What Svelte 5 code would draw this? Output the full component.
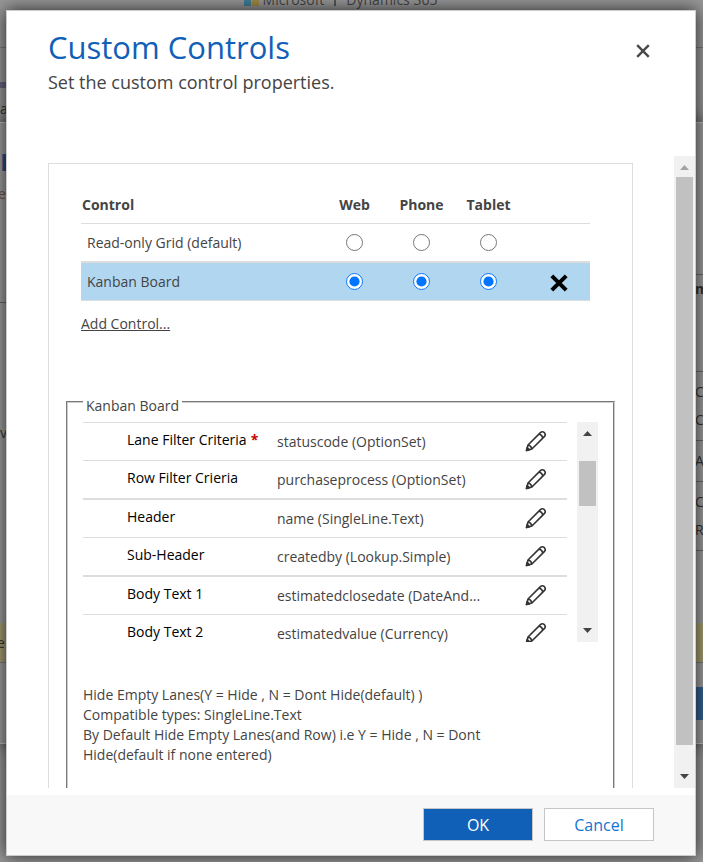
<script>
  const devices = ['Web', 'Phone', 'Tablet'];
  const controls = ['Read-only Grid (default)', 'Kanban Board'];
  let selected = $state({ Web: 1, Phone: 1, Tablet: 1 });

  const properties = [
    { name: 'Lane Filter Criteria', value: 'statuscode (OptionSet)', required: true },
    { name: 'Row Filter Crieria', value: 'purchaseprocess (OptionSet)' },
    { name: 'Header', value: 'name (SingleLine.Text)' },
    { name: 'Sub-Header', value: 'createdby (Lookup.Simple)' },
    { name: 'Body Text 1', value: 'estimatedclosedate (DateAnd...' },
    { name: 'Body Text 2', value: 'estimatedvalue (Currency)' }
  ];
</script>

{#snippet arrow(direction, muted)}
  <svg class="arrow" class:muted width="9" height="5" viewBox="0 0 9 5" aria-hidden="true">
    <path d={direction === 'up' ? 'M0 5L4.5 0L9 5Z' : 'M0 0L4.5 5L9 0Z'} fill="currentColor" />
  </svg>
{/snippet}

<div class="screen">
  <div class="page" aria-hidden="true">
    <div class="brand">
      <svg width="15" height="16" viewBox="0 0 15 16">
        <path d="M0 0H7V16H0Z" fill="#3f7f98" />
        <path d="M8 0H15V16H8Z" fill="#a08a45" />
      </svg>
      <span>Microsoft</span><span class="bar"></span><span>Dynamics 365</span>
    </div>
    <div class="ribbon"><i></i>a</div>
    <div class="under">
      <div class="under-body">
        <div class="left">
          <div class="top"><strong>r</strong><em>e</em></div>
          <div class="mid">v</div>
        </div>
        <div class="right">
          <div class="top"></div>
          <div class="heading">m</div>
          <div>C<br />C</div>
          <div>A</div>
          <div>C<br />R</div>
        </div>
      </div>
      <div class="under-note">e</div>
      <div class="under-foot"><div></div></div>
    </div>
  </div>

  <div class="dialog" role="dialog" aria-labelledby="title" aria-describedby="subtitle">
    <header>
      <div>
        <h1 id="title">Custom Controls</h1>
        <p id="subtitle">Set the custom control properties.</p>
      </div>
      <button class="close" aria-label="Close">
        <svg width="14" height="14" viewBox="0 0 14 14" aria-hidden="true">
          <path d="M1.2 1.2L12.8 12.8M12.8 1.2L1.2 12.8" stroke="#4a4a4a" stroke-width="2.4" />
        </svg>
      </button>
    </header>

    <div class="body">
      <div class="viewport">
        <section class="panel">
          <table>
            <thead>
              <tr>
                <th class="name">Control</th>
                {#each devices as device}<th class="device">{device}</th>{/each}
                <th class="remove"></th>
              </tr>
            </thead>
            <tbody>
              {#each controls as control, i}
                <tr class:selected={i === 1}>
                  <td class="name">{control}</td>
                  {#each devices as device}
                    <td class="device">
                      <input
                        type="radio"
                        name={device}
                        value={i}
                        bind:group={selected[device]}
                        aria-label={`${control}, ${device}`}
                      />
                    </td>
                  {/each}
                  <td class="remove">
                    {#if i === 1}
                      <button aria-label="Remove Kanban Board">
                        <svg width="18" height="18" viewBox="0 0 18 18" aria-hidden="true">
                          <path d="M1.8 1.8L16.2 16.2M16.2 1.8L1.8 16.2" stroke="#000" stroke-width="4" />
                        </svg>
                      </button>
                    {/if}
                  </td>
                </tr>
              {/each}
            </tbody>
          </table>
          <a class="add" href="#add">Add Control...</a>

          <fieldset>
            <legend>Kanban Board</legend>
            <div class="properties">
              <ul>
                {#each properties as property}
                  <li>
                    <span class="label">{property.name}{#if property.required}<b>*</b>{/if}</span>
                    <span class="value">{property.value}</span>
                    <button aria-label={`Edit ${property.name}`}>
                      <svg width="22" height="22" viewBox="0 0 22 22" fill="none" stroke="#333" stroke-width="1.6" stroke-linejoin="round" aria-hidden="true">
                        <path d="M1.6 20.4L3 15L15.4 2.6Q17.3.8 19.4 2.7Q21.2 4.7 19.3 6.6L6.9 19Z" />
                        <path d="M3 15Q6.2 15.6 6.9 19M14 4Q17 4.8 17.9 8" />
                        <path d="M1.4 20.6L2.2 17.5L4.5 19.8Z" fill="#333" />
                      </svg>
                    </button>
                  </li>
                {/each}
              </ul>
              <div class="scrollbar inner">
                {@render arrow('up', false)}
                <div class="track"><div class="thumb"></div></div>
                {@render arrow('down', false)}
              </div>
            </div>
            <p class="help">
              Hide Empty Lanes(Y = Hide , N = Dont Hide(default) )<br />
              Compatible types: SingleLine.Text<br />
              By Default Hide Empty Lanes(and Row) i.e Y = Hide , N = Dont Hide(default if none entered)
            </p>
          </fieldset>
        </section>
      </div>
      <div class="scrollbar">
        {@render arrow('up', true)}
        <div class="track"><div class="thumb"></div></div>
        {@render arrow('down', false)}
      </div>
    </div>

    <footer>
      <button class="primary">OK</button>
      <button>Cancel</button>
    </footer>
  </div>
</div>

<style>
  :global(body) {
    margin: 0;
  }

  .screen {
    position: relative;
    box-sizing: border-box;
    display: flex;
    height: 100vh;
    padding: 10px 7px 6px 6px;
    overflow: hidden;
    background: #979797;
    color: #444;
    font: 14px/20px "Segoe UI", "Open Sans", "Noto Sans", sans-serif;
  }

  /* dimmed page behind the dialog */
  .page {
    position: absolute;
    inset: 0;
    display: flex;
    flex-direction: column;
    overflow: hidden;
  }
  .brand {
    display: flex;
    flex: none;
    align-items: flex-start;
    justify-content: center;
    gap: 4px;
    height: 58px;
    margin-top: -10px;
    padding-right: 22px;
    border-bottom: 1px solid #777;
    box-sizing: border-box;
    color: #444;
  }
  .bar {
    width: 2px;
    height: 16px;
    margin: 0 6px;
    background: #555;
  }
  .ribbon {
    flex: none;
    height: 74px;
    color: #333;
    line-height: 66px;
    padding-top: 0;
  }
  .ribbon i {
    display: block;
    width: 6px;
    height: 6px;
    margin: 34px 0 -12px;
    background: #666280;
  }
  .under {
    display: flex;
    flex-direction: column;
    flex: none;
    height: 620px;
    border-bottom: 1px solid #bbb;
    border-top: 1px solid #bbb;
    background: #9b9b9b;
    box-shadow: 0 0 16px #333;
  }
  .under-body {
    display: flex;
    flex: none;
    justify-content: space-between;
    height: 500px;
    color: #333;
    line-height: 28px;
  }
  .left .top {
    height: 180px;
    padding-top: 23px;
    box-sizing: border-box;
    border-bottom: 1px solid #666;
  }
  .left strong {
    display: block;
    color: #294f80;
    font-size: 30px;
    line-height: 28px;
  }
  .left em {
    display: block;
    margin: 6px 0 0 -2px;
    color: #70513a;
    font-style: normal;
  }
  .left .mid {
    padding-top: 116px;
  }
  .right {
    width: 8px;
  }
  .right div {
    padding: 6px 0;
    border-bottom: 1px solid #666;
  }
  .right .top {
    height: 139px;
  }
  .right .heading {
    height: 96px;
    padding: 0;
    font-weight: 700;
  }
  .under-note {
    flex: none;
    height: 39px;
    background: #a39b70;
    border-bottom: 1px solid #777;
    color: #333;
    line-height: 39px;
  }
  .under-note {
    text-indent: -3px;
  }
  .under-foot {
    display: flex;
    justify-content: flex-end;
    align-items: center;
    height: 80px;
  }
  .under-foot div {
    width: 30px;
    height: 33px;
    background: #34608f;
  }

  .dialog {
    position: relative;
    display: flex;
    flex: 1;
    flex-direction: column;
    min-width: 0;
    border: 1px solid #ccc;
    box-sizing: border-box;
    background: #fff;
    box-shadow: 0 0 16px rgb(0 0 0 / 75%);
  }

  header {
    display: flex;
    justify-content: space-between;
    align-items: flex-start;
    height: 145px;
    padding: 14px 45px 0 41px;
    box-sizing: border-box;
    flex: none;
  }
  h1 {
    margin: 0;
    color: #1160b7;
    font-size: 31px;
    font-weight: 400;
    line-height: 44px;
  }
  #subtitle {
    margin: 0;
    font-size: 18px;
    line-height: 26px;
  }
  .close {
    margin-top: 19px;
  }
  button {
    display: inline-flex;
    align-items: center;
    justify-content: center;
    padding: 0;
    border: 0;
    background: none;
    color: inherit;
    font: inherit;
    cursor: pointer;
  }

  .body {
    display: flex;
    flex: 1;
    min-height: 0;
    margin-bottom: 7px;
  }
  .viewport {
    flex: 1;
    min-width: 0;
    overflow: hidden;
    padding: 7px 41px 0;
  }
  .panel {
    border: 1px solid #ddd;
    padding: 22px 17px 40px;
  }

  table {
    width: calc(100% - 40px);
    margin: 0 25px 0 15px;
    border-collapse: separate;
    border-spacing: 0;
    table-layout: fixed;
  }
  th,
  td {
    box-sizing: border-box;
    height: 38px;
    padding: 0;
    border-bottom: 1px solid #ddd;
    text-align: center;
  }
  th {
    font-weight: 700;
  }
  tbody tr:first-child td {
    height: 39px;
    border-bottom-width: 2px;
  }
  th.name {
    padding-left: 1px;
    text-align: left;
  }
  td.name {
    padding-left: 6px;
    text-align: left;
  }
  .device {
    width: 67px;
  }
  .remove {
    width: 68px;
    padding-left: 6px;
  }
  .selected td {
    background: #b1d6f0;
  }
  input {
    display: block;
    width: 17px;
    height: 17px;
    margin: 0 auto;
    accent-color: #0075ff;
  }
  td button {
    vertical-align: middle;
  }
  .add {
    display: inline-block;
    margin: 13px 0 0 15px;
    color: inherit;
  }

  fieldset {
    min-width: 0;
    margin: 53px 0 0;
    padding: 6px 15px 80px;
    border: 2px groove #ccc;
  }
  legend {
    padding: 9px 3px 0;
  }
  .properties {
    display: flex;
    gap: 10px;
    height: 220px;
    overflow: hidden;
  }
  ul {
    flex: 1;
    min-width: 0;
    margin: 0;
    padding: 0;
    list-style: none;
  }
  li {
    display: flex;
    height: 37px;
    border-top: 1px solid #ddd;
  }
  li:nth-child(2n + 3) {
    border-top-width: 2px;
  }
  .label {
    width: 194px;
    padding: 7px 0 0 44px;
    box-sizing: border-box;
    color: #000;
    white-space: nowrap;
  }
  .label b {
    margin-left: 4px;
    color: #c00;
  }
  .value {
    flex: 1;
    padding-top: 9px;
    white-space: nowrap;
  }
  li button {
    align-self: flex-start;
    margin: 7px 20px 0 0;
  }

  .scrollbar {
    display: flex;
    flex: none;
    flex-direction: column;
    align-items: center;
    justify-content: space-between;
    width: 21px;
    box-sizing: border-box;
    padding: 9px 2px;
    background: #f1f1f1;
  }
  .arrow {
    flex: none;
    color: #444;
  }
  .arrow.muted {
    color: #a3a3a3;
  }
  .track {
    flex: 1;
    width: 100%;
    margin: 7px 0 29px;
  }
  .thumb {
    height: 100%;
    background: #c1c1c1;
  }
  .inner .track {
    margin: 25px 0 0;
  }
  .inner .thumb {
    height: 45px;
  }

  .help {
    width: 430px;
    max-width: 100%;
    margin: 43px 0 0;
  }

  footer {
    display: flex;
    justify-content: flex-end;
    gap: 11px;
    height: 60px;
    box-sizing: border-box;
    padding: 13px 41px 14px;
    background: #f8f8f8;
  }
  footer button {
    width: 110px;
    border: 1px solid #c6c6c6;
    background: #fff;
    color: #1374d4;
    font-size: 16px;
  }
  footer .primary {
    background: #1160b7;
    color: #fff;
  }
</style>
